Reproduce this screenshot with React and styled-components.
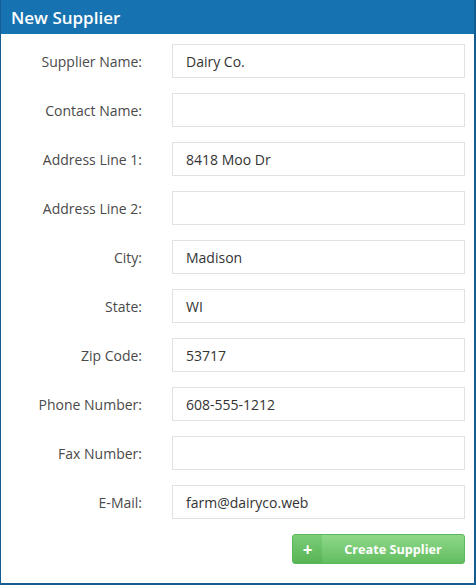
import React from "react";
import styled, { createGlobalStyle } from "styled-components";

const GlobalStyle = createGlobalStyle`
    body {
        margin: 0;
        font-family: "Open Sans", "Liberation Sans", sans-serif;
        background: #ffffff;
    }
`;

const fields = [
    { label: "Supplier Name:", value: "Dairy Co." },
    { label: "Contact Name:", value: "" },
    { label: "Address Line 1:", value: "8418 Moo Dr" },
    { label: "Address Line 2:", value: "" },
    { label: "City:", value: "Madison" },
    { label: "State:", value: "WI" },
    { label: "Zip Code:", value: "53717" },
    { label: "Phone Number:", value: "608-555-1212" },
    { label: "Fax Number:", value: "" },
    { label: "E-Mail:", value: "farm@dairyco.web" },
];

export default function App() {
    return (
        <>
            <GlobalStyle />
            <Panel>
                <Header>New Supplier</Header>
                <Form onSubmit={(e) => e.preventDefault()}>
                    {fields.map((f) => (
                        <React.Fragment key={f.label}>
                            <Label>{f.label}</Label>
                            <Input defaultValue={f.value} />
                        </React.Fragment>
                    ))}
                    <Actions>
                        <Button type="submit">
                            <Plus>+</Plus>
                            <ButtonText>Create Supplier</ButtonText>
                        </Button>
                    </Actions>
                </Form>
            </Panel>
        </>
    );
}

const Panel = styled.section`
    width: 476px;
    height: 585px;
    box-sizing: border-box;
    border-style: solid;
    border-color: #145d92;
    border-width: 0 2px 2px 1px;
    background: #fff;
`;

const Header = styled.h2`
    margin: 0;
    height: 34px;
    padding: 0 10px;
    display: flex;
    align-items: center;
    background: #1672b0;
    color: #fff;
    font-size: 17px;
    font-weight: 600;
`;

const Form = styled.form`
    display: grid;
    grid-template-columns: 141px 1fr;
    column-gap: 30px;
    row-gap: 15px;
    padding: 10px 9px 0 0;
`;

const Label = styled.label`
    display: flex;
    align-items: center;
    justify-content: flex-end;
    height: 34px;
    font-size: 14px;
    color: #4a4a4a;
`;

const Input = styled.input`
    box-sizing: border-box;
    height: 34px;
    width: 100%;
    padding: 0 13px;
    border: 1px solid #e2e2e2;
    border-radius: 0;
    font-family: inherit;
    font-size: 14px;
    color: #333;
    outline: none;
`;

const Actions = styled.div`
    grid-column: 2;
    display: flex;
    justify-content: flex-end;
`;

const Button = styled.button`
    display: flex;
    align-items: stretch;
    width: 173px;
    height: 30px;
    padding: 0;
    border: 1px solid #5cb85c;
    border-radius: 3px;
    background: linear-gradient(#8fd88a, #62bd5f);
    color: #fff;
    font-family: inherit;
    cursor: pointer;
    overflow: hidden;
`;

const Plus = styled.span`
    width: 29px;
    display: flex;
    align-items: center;
    justify-content: center;
    background: linear-gradient(#7ccd78, #57b454);
    font-size: 17px;
    font-weight: 700;
`;

const ButtonText = styled.span`
    flex: 1;
    display: flex;
    align-items: center;
    justify-content: center;
    font-size: 12.7px;
    font-weight: 700;
`;
